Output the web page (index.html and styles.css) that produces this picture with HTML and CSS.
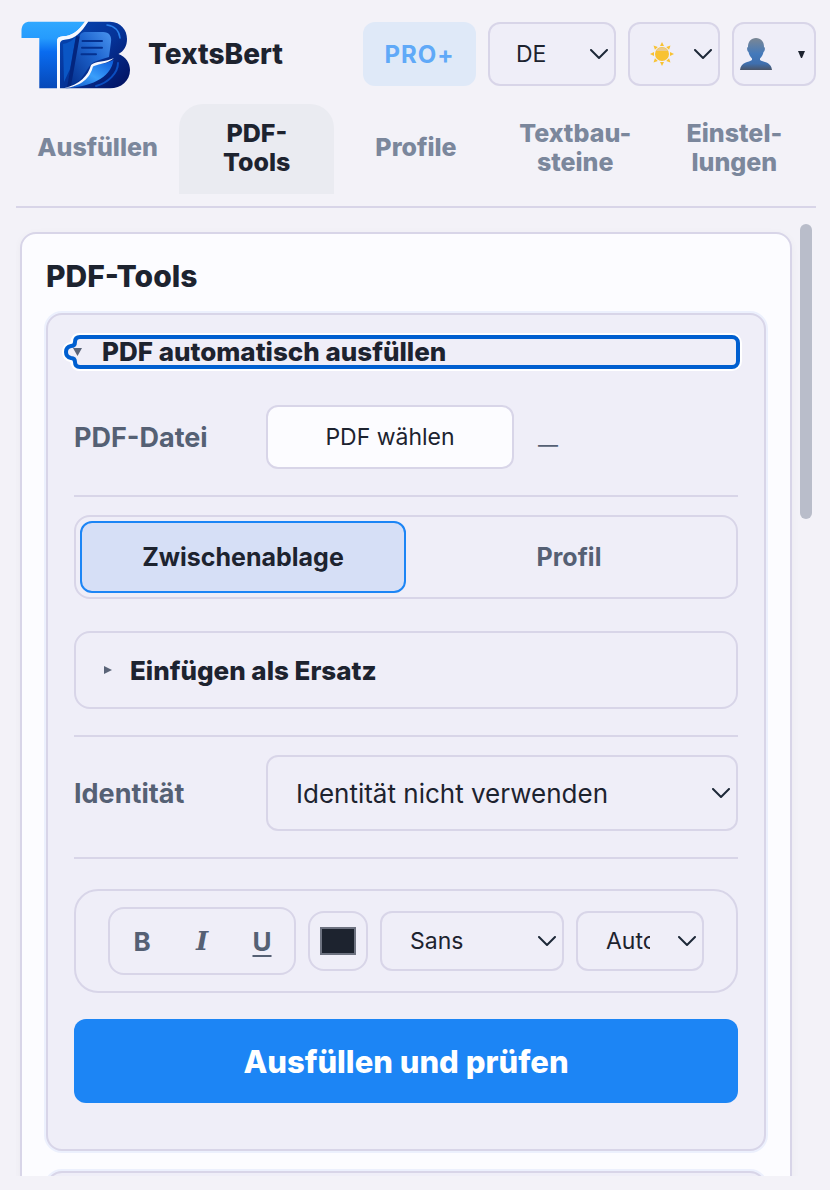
FILE: index.html
```html
<!DOCTYPE html>
<html lang="de">
<head>
    <meta charset="UTF-8">
    <meta name="viewport" content="width=device-width, initial-scale=1.0">
    <title>TextsBert</title>
    <link rel="stylesheet" href="styles.css">
</head>
<body>
    <header class="header">
        <svg class="logo" viewBox="0 0 112 71" aria-hidden="true">
            <defs>
                <linearGradient id="logo-t" x1="0" y1="0" x2="0" y2="1">
                    <stop offset="0" stop-color="#2fa8ff"/>
                    <stop offset="0.25" stop-color="#259bfd"/>
                    <stop offset="0.45" stop-color="#0a6cf0"/>
                    <stop offset="1" stop-color="#0648b8"/>
                </linearGradient>
                <linearGradient id="logo-b" x1="0" y1="0" x2="1" y2="1">
                    <stop offset="0" stop-color="#0648b4"/>
                    <stop offset="0.5" stop-color="#053398"/>
                    <stop offset="1" stop-color="#020f5c"/>
                </linearGradient>
                <linearGradient id="logo-page" x1="1" y1="0" x2="0" y2="1">
                    <stop offset="0" stop-color="#4a94ee"/>
                    <stop offset="0.4" stop-color="#1f66d0"/>
                    <stop offset="1" stop-color="#04308e"/>
                </linearGradient>
                <linearGradient id="logo-curl" x1="1" y1="0" x2="0" y2="1">
                    <stop offset="0" stop-color="#0b5ada"/>
                    <stop offset="0.5" stop-color="#3a9efa"/>
                    <stop offset="1" stop-color="#0a4cc0"/>
                </linearGradient>
            </defs>
            <path fill="url(#logo-b)" d="M68 2.700H90C101 3 107 11 107 20C107 27 104 32 98.500 35C106 38 110 44 110 51C110 62 101 69.300 90 69.300H40V20.700C53 19 59 13 68 2.700Z"/>
            <path fill="#0a56c4" d="M43 25C49 24 53 21 56 17L50 50L44 63Z"/>
            <path fill="#03257e" d="M56 17L47 69L52 67L61 18Z"/>
            <path fill="url(#logo-page)" d="M60 16C61 13.500 64 13 67 13H83C89 13 92 17 91 23L89 38C80 41 72 42 69 48L60 61L51 67Z"/>
            <path fill="none" stroke="#04318f" stroke-width="2" stroke-linecap="round" d="M62.500 22H82M62 28.700H82M61.500 35.300H76"/>
            <path fill="none" stroke="#2a80ea" stroke-width="1.500" stroke-linecap="round" d="M87 6C94 7 99 11 100 19"/>
            <path fill="none" stroke="#0b4ec0" stroke-width="2" stroke-linecap="round" d="M98 44C98 54 88 64 76 67"/>
            <path fill="url(#logo-curl)" d="M93.500 41C87 45 76 45 72.500 47C69 58 60 66 46 69.300C68 68 91 60 93.500 41Z"/>
            <path fill="#f7f9ff" d="M94 39C86 43 75 42 71 46C68 57 60 65 44 69.300C62 67 70 59 73 47.500C77 45 88 45 94 39Z"/>
            <path fill="url(#logo-t)" d="M1.500 19V11C2 5 5 2.700 10 2.700H65C58 12 52 17 43 17.300C39 17.500 37 19 37 22V69.300H19.300V19Z"/>
            <path fill="#f7f9ff" d="M65 2.700H68C61 14 55 19.500 46 20.500C42 21 40 22 40 25V69.300H37V22C37 19 39 17.500 43 17.300C52 17 58 12 65 2.700Z"/>
        </svg>
        <h1 class="brand">TextsBert</h1>
        <div class="header-actions">
            <button class="pro" type="button" disabled>PRO+</button>
            <select class="select select-lang" aria-label="Sprache">
                <option>DE</option>
            </select>
            <select class="select select-theme" aria-label="Design">
                <option value="light"></option>
            </select>
            <button class="account" type="button" aria-label="Konto">
                <svg width="34" height="34" viewBox="0 0 34 34" aria-hidden="true">
                    <defs>
                        <linearGradient id="person" x1="0" y1="0" x2="0" y2="1">
                            <stop offset="0" stop-color="#7b8794"/>
                            <stop offset="0.5" stop-color="#4379bb"/>
                            <stop offset="0.8" stop-color="#3f6fae"/>
                            <stop offset="1" stop-color="#4a5568"/>
                        </linearGradient>
                    </defs>
                    <path fill="url(#person)" d="M17 1C22 1 25 4.500 25 10C26.500 10 26 14.500 24.500 15C24 18 22.500 20 21 21.500V23C24 25.500 32 24.500 33 33H1C2 24.500 10 25.500 13 23V21.500C11.500 20 10 18 9.500 15C8 14.500 7.500 10 9 10C9 4.500 12 1 17 1Z"/>
                </svg>
                <svg width="8" height="8" viewBox="0 0 8 8" aria-hidden="true"><path fill="#1d232f" d="M0 1H7L4 8H3Z"/></svg>
            </button>
        </div>
    </header>

    <nav class="tabs">
        <a class="tab" href="#ausfuellen">Ausfüllen</a>
        <a class="tab active" href="#pdf-tools">PDF-<br>Tools</a>
        <a class="tab" href="#profile">Profile</a>
        <a class="tab" href="#textbausteine">Textbau-<br>steine</a>
        <a class="tab" href="#einstellungen">Einstel-<br>lungen</a>
    </nav>

    <div class="content">
        <main class="card" id="pdf-tools">
            <h2 class="card-title">PDF-Tools</h2>

            <details class="panel" open>
                <summary class="panel-summary">
                    <svg class="ring-notch" width="28" height="38" viewBox="0 0 28 38" aria-hidden="true">
                        <path fill="none" stroke="#ffffff" stroke-width="8" d="M28 4H20Q15 4 15 9Q15 13 11 13Q6 14 6 19Q6 24 11 25Q15 25 15 29Q15 34 20 34H28"/>
                        <path fill="#efeef8" stroke="#005fd0" stroke-width="4" d="M28 4H20Q15 4 15 9Q15 13 11 13Q6 14 6 19Q6 24 11 25Q15 25 15 29Q15 34 20 34H28"/>
                        <path fill="#5a6478" d="M13 15H22L17.500 23Z"/>
                    </svg>
                    PDF automatisch ausfüllen
                </summary>

                <div class="row">
                    <span class="row-label">PDF-Datei</span>
                    <div class="file">
                        <button class="file-button" type="button">PDF wählen</button>
                        <span class="file-name">—</span>
                    </div>
                </div>

                <div class="segments">
                    <button class="segment active" type="button">Zwischenablage</button>
                    <button class="segment" type="button">Profil</button>
                </div>

                <details class="fallback">
                    <summary class="fallback-summary">
                        <svg width="8" height="8" viewBox="0 0 8 8" aria-hidden="true"><path fill="#5a6478" d="M0 0L8 4L0 8Z"/></svg>
                        Einfügen als Ersatz
                    </summary>
                </details>

                <div class="row row-identity">
                    <label class="row-label" for="identity">Identität</label>
                    <select class="select select-identity" id="identity">
                        <option>Identität nicht verwenden</option>
                    </select>
                </div>

                <div class="toolbar">
                    <div class="format">
                        <button class="format-button" type="button">B</button>
                        <button class="format-button italic" type="button">I</button>
                        <button class="format-button underline" type="button">U</button>
                    </div>
                    <input class="color" type="color" value="#1d232f" aria-label="Textfarbe">
                    <select class="select select-font" aria-label="Schriftart">
                        <option>Sans</option>
                    </select>
                    <select class="select select-size" aria-label="Schriftgröße">
                        <option>Auto</option>
                    </select>
                </div>

                <button class="submit" type="button">Ausfüllen und prüfen</button>
            </details>

            <section class="panel panel-next"></section>
        </main>
        <div class="scrollbar"><div class="scrollbar-thumb"></div></div>
    </div>
</body>
</html>
```
FILE: styles.css
```css
* {
    box-sizing: border-box;
}

body {
    display: flex;
    flex-direction: column;
    height: 100vh;
    margin: 0;
    padding: 16px 14px 14px 16px;
    overflow: hidden;
    background-color: #f3f2f8;
    color: #1d232f;
    font-family: Inter, "Liberation Sans", sans-serif;
    font-size: 24px;
}

button, select, input {
    font-family: inherit;
    color: inherit;
    margin: 0;
}

h1, h2 {
    margin: 0;
}

/* Header */
.header {
    display: flex;
    align-items: center;
    height: 76px;
    padding-left: 4px;
    flex-shrink: 0;
}

.logo {
    width: 112px;
    height: 71px;
    margin-right: 16px;
}

.brand {
    font-size: 28px;
    font-weight: 800;
}

.header-actions {
    display: flex;
    gap: 12px;
    margin-left: auto;
}

.header-actions > * {
    height: 64px;
}

.pro {
    width: 113px;
    border: none;
    border-radius: 12px;
    background-color: #dfe9f8;
    color: #60a9f8;
    font-size: 24px;
    font-weight: 700;
    letter-spacing: 1px;
}

.select {
    appearance: none;
    padding: 0 52px 0 26px;
    border: 2px solid #d8d5e8;
    border-radius: 12px;
    background: #efeef8 url("data:image/svg+xml,%3Csvg xmlns='http://www.w3.org/2000/svg' width='18' height='11' fill='none' stroke='%231d2838' stroke-width='2' stroke-linecap='round' stroke-linejoin='round'%3E%3Cpath d='M1 1L9 9L17 1'/%3E%3C/svg%3E") no-repeat right 6px center;
    font-size: 23px;
}

.select-lang {
    width: 128px;
}

.select-theme {
    width: 92px;
    background-image: url("data:image/svg+xml,%3Csvg xmlns='http://www.w3.org/2000/svg' width='18' height='11' fill='none' stroke='%231d2838' stroke-width='2' stroke-linecap='round' stroke-linejoin='round'%3E%3Cpath d='M1 1L9 9L17 1'/%3E%3C/svg%3E"), url("data:image/svg+xml,%3Csvg xmlns='http://www.w3.org/2000/svg' width='24' height='24' viewBox='-12 -12 24 24' fill='%23f8c232'%3E%3Ccircle r='7'/%3E%3Cpath fill='%23eccb8c' d='M-6-3A7 7 0 0 1 6-3Z'/%3E%3Cpath d='M-2-8L0-12L2-8ZM-2 8L0 12L2 8ZM8-2L12 0L8 2ZM-8-2L-12 0L-8 2Z'/%3E%3Cpath transform='rotate(45)' d='M-2-8L0-12L2-8ZM-2 8L0 12L2 8ZM8-2L12 0L8 2ZM-8-2L-12 0L-8 2Z'/%3E%3C/svg%3E");
    background-position: right 6px center, 20px center;
}

.account {
    display: flex;
    align-items: center;
    justify-content: space-between;
    width: 84px;
    padding: 0 8px 0 5px;
    border: 2px solid #d8d5e8;
    border-radius: 12px;
    background-color: #efeef8;
}

/* Tabs */
.tabs {
    display: grid;
    grid-template-columns: repeat(5, 1fr);
    gap: 4px;
    margin-top: 12px;
    padding: 0 4px 12px;
    border-bottom: 2px solid #d8d5e8;
    flex-shrink: 0;
}

.tab {
    display: flex;
    align-items: center;
    justify-content: center;
    height: 90px;
    padding-bottom: 3px;
    border-radius: 24px 24px 0 0;
    color: #7b879c;
    font-size: 25px;
    font-weight: 800;
    line-height: 29px;
    text-align: center;
    text-decoration: none;
}

.tab.active {
    background-color: #eaebf1;
    color: #1d232f;
}

/* Scrolling content */
.content {
    display: flex;
    flex: 1;
    gap: 8px;
    min-height: 0;
    margin-top: 16px;
    padding: 0 4px;
    overflow: hidden;
}

.card {
    flex: 1;
    align-self: flex-start;
    margin-top: 8px;
    padding: 24px;
    border: 2px solid #d8d5e8;
    border-radius: 16px;
    background-color: #fcfcff;
    box-shadow: 0 2px 8px rgba(29, 35, 47, 0.04);
}

.card-title {
    margin-bottom: 19px;
    font-size: 30px;
    font-weight: 800;
    line-height: 36px;
}

.scrollbar {
    width: 12px;
}

.scrollbar-thumb {
    height: 31%;
    border-radius: 6px;
    background-color: #b9bdca;
}

.panel {
    padding: 20px 26px 46px;
    border: 2px solid #d8d5e8;
    border-radius: 16px;
    background-color: #efeef8;
    box-shadow: 0 0 0 2px #ecf0fd;
}

.panel-next {
    min-height: 120px;
    margin-top: 20px;
}

.panel-summary {
    position: relative;
    display: block;
    margin: 0 -2px 36px;
    padding-left: 26px;
    border: 4px solid #005fd0;
    border-radius: 8px;
    box-shadow: 0 0 0 2px #ffffff;
    font-size: 26px;
    font-weight: 800;
    line-height: 26px;
}

.ring-notch {
    position: absolute;
    top: -6px;
    left: -16px;
}

.row {
    display: grid;
    grid-template-columns: 192px 1fr;
    align-items: center;
    padding-bottom: 26px;
    border-bottom: 2px solid #d8d5e8;
}

.row-label {
    color: #556074;
    font-size: 27px;
    font-weight: 700;
}

.file {
    display: flex;
    align-items: center;
    gap: 24px;
}

.file-button {
    width: 248px;
    height: 64px;
    border: 2px solid #d8d5e8;
    border-radius: 12px;
    background-color: #fcfcff;
    font-size: 23px;
}

.file-name {
    padding-top: 16px;
    color: #556074;
    font-size: 20px;
}

.segments {
    display: grid;
    grid-template-columns: 1fr 1fr;
    margin: 18px 0 32px;
    padding: 4px;
    border: 2px solid #d8d5e8;
    border-radius: 16px;
}

.segment {
    height: 72px;
    border: 2px solid transparent;
    border-radius: 12px;
    background: none;
    color: #556074;
    font-size: 25px;
    font-weight: 700;
}

.segment.active {
    border-color: #1c85f5;
    background-color: #d6dff6;
    color: #1d232f;
}

.fallback {
    border: 2px solid #d8d5e8;
    border-radius: 16px;
}

.fallback-summary {
    display: flex;
    align-items: center;
    gap: 18px;
    height: 74px;
    padding-left: 28px;
    font-size: 26px;
    font-weight: 800;
}

.row-identity {
    margin-top: 26px;
    padding-top: 18px;
    border-top: 2px solid #d8d5e8;
}

.select-identity {
    height: 76px;
    padding-left: 28px;
    font-size: 26px;
}

.toolbar {
    display: flex;
    align-items: center;
    gap: 12px;
    height: 104px;
    margin: 30px 0 26px;
    padding: 0 32px;
    border: 2px solid #d8d5e8;
    border-radius: 24px;
}

.format {
    display: flex;
    padding: 2px;
    border: 2px solid #d8d5e8;
    border-radius: 16px;
}

.format-button {
    width: 60px;
    height: 60px;
    border: none;
    background: none;
    color: #556074;
    font-size: 26px;
    font-weight: 700;
}

.italic {
    font-family: "DejaVu Serif", serif;
    font-style: italic;
}

.underline {
    text-decoration: underline;
    text-decoration-thickness: 2px;
    text-underline-offset: 4px;
}

.color {
    width: 60px;
    height: 60px;
    padding: 14px 10px;
    border: 2px solid #d8d5e8;
    border-radius: 16px;
    background: none;
}

.color::-webkit-color-swatch-wrapper {
    padding: 0;
}

.color::-webkit-color-swatch {
    border: 2px solid #6d7280;
}

.select-font,
.select-size {
    height: 60px;
    padding-left: 28px;
}

.select-font {
    width: 184px;
}

.select-size {
    width: 128px;
}

.submit {
    display: block;
    width: 100%;
    height: 84px;
    border: none;
    border-radius: 12px;
    background-color: #1c85f5;
    color: #ffffff;
    font-size: 31px;
    font-weight: 800;
}
```
